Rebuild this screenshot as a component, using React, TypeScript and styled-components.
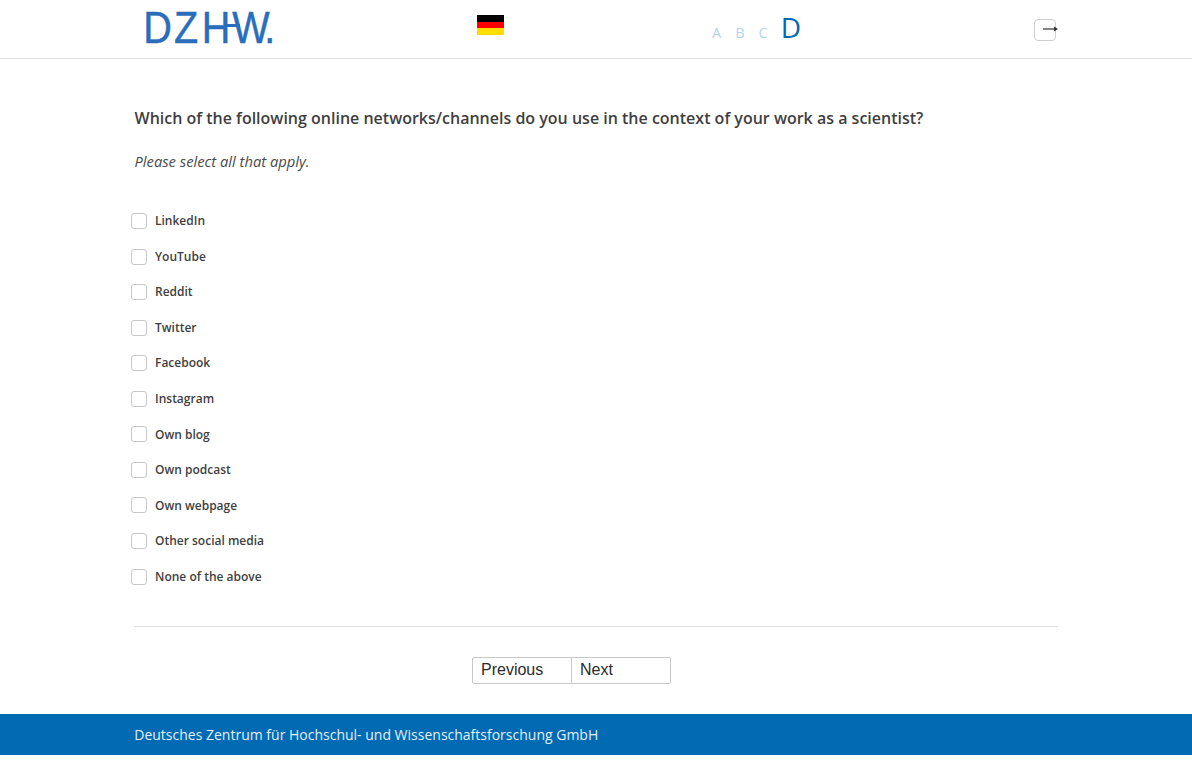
import React from 'react';
import styled, { createGlobalStyle } from 'styled-components';

const GlobalStyle = createGlobalStyle`
    html, body {
        margin: 0;
        padding: 0;
        background: #fff;
        font-family: "Open Sans", "Liberation Sans", sans-serif;
        color: #3f3f3f;
    }
`;

const HeaderBar = styled.div`
    border-bottom: 1px solid #dedede;
`;

const Header = styled.header`
    height: 58px;
    display: grid;
    grid-template-columns: 343px 235px 322px 24px;
    width: 924px;
    margin: 0 auto;
`;

const LogoBox = styled.div`
    padding: 10px 0 0 8px;
`;

const Flag = styled.div`
    width: 27px;
    height: 20px;
    margin-top: 15px;
    background: linear-gradient(#000 33.3%, #f00 33.3%, #f00 66.6%, #ffdd00 66.6%);
`;

const Levels = styled.div`
    display: flex;
    align-items: baseline;
    gap: 14px;
    padding-top: 7px;
    line-height: 40px;
`;

const Level = styled.span<{ $active?: boolean }>`
    font-size: ${({ $active }) => ($active ? '28px' : '14.5px')};
    font-weight: ${({ $active }) => ($active ? 500 : 400)};
    margin-left: ${({ $active }) => ($active ? '-1px' : '0')};
    color: ${({ $active }) => ($active ? '#006ab3' : '#b5d4ea')};
`;

const LogoutButton = styled.button`
    width: 22px;
    height: 22px;
    margin: 19px 0 0 0;
    padding: 0;
    background: #fff;
    border: 1px solid #cfcfcf;
    border-radius: 4px;
    position: relative;

    svg {
        position: absolute;
        left: 8px;
        top: 4px;
    }
`;

const Main = styled.main`
    width: 924px;
    margin: 0 auto;
`;

const Question = styled.h1`
    margin: 0;
    padding: 48px 0 0 0.5px;
    font-size: 16px;
    line-height: 22px;
    font-weight: 600;
    color: #3f3f3f;
`;

const Instruction = styled.p`
    margin: 21px 0 0;
    padding-left: 0.5px;
    font-size: 14.75px;
    line-height: 22px;
    font-style: italic;
    color: #4a4a4a;
`;

const Options = styled.ul`
    list-style: none;
    margin: 30.9px 0 0 -3px;
    padding: 0;
    display: grid;
    grid-auto-rows: 35.57px;
`;

const OptionRow = styled.li`
    display: flex;
    align-items: center;
    gap: 8px;
`;

const Box = styled.span`
    width: 14px;
    height: 14px;
    margin-top: 0.6px;
    border: 1px solid #c8c8c8;
    border-radius: 3px;
    background: #fff;
`;

const OptionLabel = styled.label`
    font-size: 12px;
    font-weight: 600;
    color: #3f3f3f;
`;

const Divider = styled.hr`
    margin: 32.3px 0 0;
    border: 0;
    border-top: 1px solid #dedede;
`;

const Nav = styled.nav`
    display: flex;
    justify-content: center;
    margin: 30px 0;
    padding-right: 49px;
`;

const NavButton = styled.button<{ $first?: boolean }>`
    width: ${({ $first }) => ($first ? '100px' : '99px')};
    height: 27px;
    padding: 0 0 2px 8px;
    text-align: left;
    font-family: "Liberation Sans", Arial, sans-serif;
    font-size: 16px;
    color: #2b2b2b;
    background: #fff;
    border: 1px solid #c8c8c8;
    border-left-width: ${({ $first }) => ($first ? '1px' : '0')};
    border-radius: ${({ $first }) => ($first ? '2px 0 0 2px' : '0 2px 2px 0')};
`;

const Footer = styled.footer`
    height: 41px;
    background: #006ab3;
`;

const FooterText = styled.div`
    width: 924px;
    margin: 0 auto;
    padding-left: 0.5px;
    font-size: 14px;
    line-height: 41px;
    color: #e3eef6;
`;

const options = [
    'LinkedIn',
    'YouTube',
    'Reddit',
    'Twitter',
    'Facebook',
    'Instagram',
    'Own blog',
    'Own podcast',
    'Own webpage',
    'Other social media',
    'None of the above',
];

const Logo = () => (
    <svg width="170" height="40" viewBox="0 0 170 40" aria-label="DZHW">
        <text
            transform="scale(0.88 1)"
            x="1.5 36.5 68 102.5 139"
            y="33"
            fill="#2a6ebb"
            stroke="#2a6ebb"
            strokeWidth="0.5"
            fontFamily="Liberation Sans, Arial, sans-serif"
            fontSize="45"
        >
            DZHW.
        </text>
        <rect x="83" y="14" width="15" height="3" fill="#2a6ebb" />
    </svg>
);

const App: React.FC = () => (
    <>
        <GlobalStyle />
        <HeaderBar>
            <Header>
                <LogoBox><Logo /></LogoBox>
                <Flag />
                <Levels>
                    <Level>A</Level>
                    <Level>B</Level>
                    <Level>C</Level>
                    <Level $active>D</Level>
                </Levels>
                <LogoutButton type="button" aria-label="Logout">
                    <svg width="16" height="10" viewBox="0 0 16 10">
                        <path d="M0 5h11" stroke="#333" strokeWidth="1.2" />
                        <path d="M11 2.5 15 5l-4 2.5z" fill="#333" />
                    </svg>
                </LogoutButton>
            </Header>
        </HeaderBar>
        <Main>
            <Question>Which of the following online networks/channels do you use in the context of your work as a scientist?</Question>
            <Instruction>Please select all that apply.</Instruction>
            <Options>
                {options.map(option => (
                    <OptionRow key={option}>
                        <Box />
                        <OptionLabel>{option}</OptionLabel>
                    </OptionRow>
                ))}
            </Options>
            <Divider />
            <Nav>
                <NavButton type="button" $first>Previous</NavButton>
                <NavButton type="button">Next</NavButton>
            </Nav>
        </Main>
        <Footer>
            <FooterText>Deutsches Zentrum für Hochschul- und Wissenschaftsforschung GmbH</FooterText>
        </Footer>
    </>
);

export default App;
